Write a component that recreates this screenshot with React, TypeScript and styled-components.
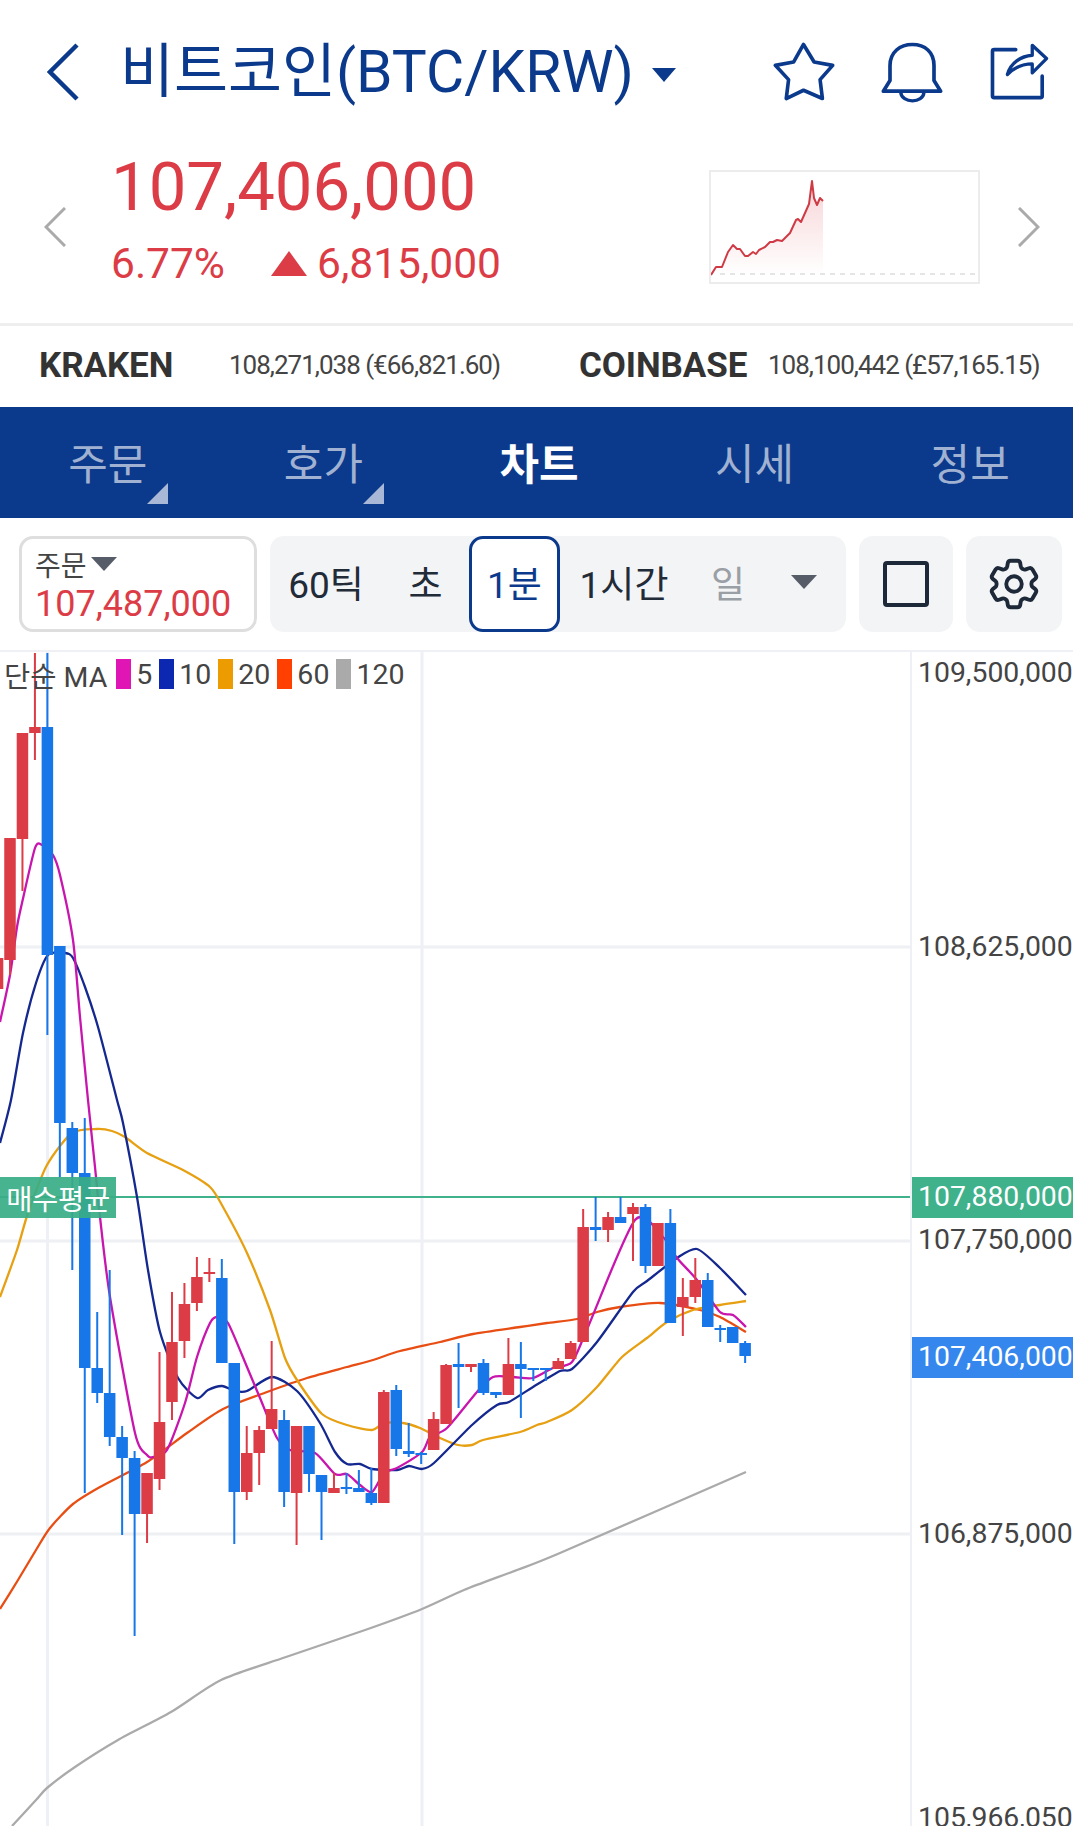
import { FC, Fragment } from 'react';
import styled, { createGlobalStyle } from 'styled-components';
import { HiOutlineCog6Tooth } from 'react-icons/hi2';

const NAVY = '#0b3a8c';
const RED = '#dc3c46';
const BLUE = '#1777e8';

const GlobalStyle = createGlobalStyle`
    html, body {
        margin: 0;
        padding: 0;
        background: #ffffff;
    }
    * {
        box-sizing: border-box;
    }
`;

const Page = styled.div`
    width: 1073px;
    height: 1826px;
    overflow: hidden;
    background: #ffffff;
    font-family: Roboto, 'Noto Sans CJK KR', sans-serif;
`;

const Header = styled.header`
    display: flex;
    align-items: center;
    height: 133px;
    padding: 10px 24px 0 47px;
    color: ${NAVY};
`;

const Title = styled.h1`
    margin: 0 0 0 41px;
    font-size: 58.7px;
    font-weight: 400;
    line-height: 60px;
    white-space: nowrap;
`;

const TitleCaret = styled.span`
    width: 0;
    height: 0;
    margin: 6px 0 0 18px;
    border-left: 12.5px solid transparent;
    border-right: 12.5px solid transparent;
    border-top: 14px solid ${NAVY};
`;

const HeaderIcons = styled.div`
    display: flex;
    align-items: center;
    gap: 44px;
    margin-left: auto;
`;

const PriceRow = styled.section`
    display: flex;
    align-items: center;
    height: 193px;
    padding: 0 33px 3px 44px;
    border-bottom: 3px solid #eeeeee;
`;

const PriceBlock = styled.div`
    display: flex;
    flex-direction: column;
    margin-left: 45px;
    padding-bottom: 16px;
    color: ${RED};
`;

const PriceMain = styled.div`
    margin-bottom: 14px;
    font-size: 67px;
    line-height: 76px;
`;

const PriceSub = styled.div`
    display: flex;
    align-items: center;
    height: 50px;
    font-size: 42.5px;
`;

const UpTriangle = styled.span`
    width: 0;
    height: 0;
    margin: 0 10px 0 46px;
    border-left: 18px solid transparent;
    border-right: 18px solid transparent;
    border-bottom: 25px solid ${RED};
`;

const MiniBox = styled.div`
    width: 271px;
    height: 114px;
    margin-left: auto;
    margin-right: 38px;
    border: 2px solid #ececec;
`;

const ExchangeRow = styled.section`
    display: flex;
    align-items: center;
    height: 81px;
    padding: 0 0 3px 39px;
`;

const ExchangeName = styled.span<{ $width: number }>`
    width: ${(p) => p.$width}px;
    font-size: 35px;
    font-weight: 700;
    letter-spacing: -0.1px;
    color: #333333;
`;

const ExchangeValue = styled.span<{ $width: number }>`
    width: ${(p) => p.$width}px;
    font-size: 26px;
    letter-spacing: -1px;
    color: #444444;
    white-space: nowrap;
`;

const Tabs = styled.nav`
    display: grid;
    grid-template-columns: repeat(5, 215.6px);
    height: 111px;
    background: ${NAVY};
`;

const Tab = styled.div<{ $active?: boolean; $corner?: boolean }>`
    position: relative;
    display: flex;
    align-items: center;
    justify-content: center;
    padding-bottom: 3px;
    font-size: 43px;
    font-weight: ${(p) => (p.$active ? 700 : 400)};
    color: ${(p) => (p.$active ? '#ffffff' : '#a0b1d1')};

    &::after {
        content: '';
        display: ${(p) => (p.$corner ? 'block' : 'none')};
        position: absolute;
        left: 147px;
        top: 76px;
        width: 0;
        height: 0;
        border-left: 21px solid transparent;
        border-bottom: 21px solid #a9b8d6;
    }
`;

const Toolbar = styled.section`
    display: flex;
    gap: 13px;
    height: 132px;
    padding: 18px 11px 0 19px;
`;

const OrderBox = styled.div`
    display: flex;
    flex-direction: column;
    justify-content: center;
    width: 238px;
    height: 96px;
    padding: 4px 0 0 13px;
    border: 3px solid #dedede;
    border-radius: 14px;
`;

const OrderLabel = styled.div`
    display: flex;
    align-items: center;
    gap: 4px;
    height: 36px;
    font-size: 28px;
    color: #444444;
`;

const Caret = styled.span<{ $width: number; $height: number }>`
    width: 0;
    height: 0;
    border-left: ${(p) => p.$width / 2}px solid transparent;
    border-right: ${(p) => p.$width / 2}px solid transparent;
    border-top: ${(p) => p.$height}px solid #565d68;
`;

const OrderPrice = styled.div`
    font-size: 36px;
    line-height: 44px;
    color: ${RED};
`;

const Intervals = styled.div`
    display: grid;
    grid-template-columns: 112px 87px 91px 128px 80px 72px;
    width: 576px;
    height: 96px;
    border-radius: 14px;
    background: #f3f4f6;
`;

const Interval = styled.div<{ $active?: boolean; $muted?: boolean }>`
    display: flex;
    align-items: center;
    justify-content: center;
    padding-bottom: 4px;
    font-size: 37px;
    color: ${(p) => (p.$active ? NAVY : p.$muted ? '#9a9ea5' : '#222b38')};
    background: ${(p) => (p.$active ? '#ffffff' : 'transparent')};
    border: ${(p) => (p.$active ? `3px solid ${NAVY}` : 'none')};
    border-radius: 14px;
`;

const ToolButton = styled.div<{ $width: number }>`
    display: flex;
    align-items: center;
    justify-content: center;
    width: ${(p) => p.$width}px;
    height: 96px;
    border-radius: 14px;
    background: #f3f4f6;
    color: #1d2939;
`;

const SquareIcon = styled.span`
    width: 46px;
    height: 46px;
    border: 4px solid #1d2939;
    border-radius: 4px;
`;

const ChartArea = styled.section`
    position: relative;
    display: grid;
    grid-template-columns: 910px 163px;
    height: 1176px;
    border-top: 2px solid #eef0f5;
`;

const Plot = styled.div`
    position: relative;
    overflow: hidden;
`;

const PlotSvg = styled.svg`
    display: block;
`;

const Legend = styled.div`
    position: absolute;
    left: 4px;
    top: 7px;
    display: flex;
    align-items: center;
    height: 30px;
    font-size: 28.5px;
    color: #444444;
`;

const LegendTitle = styled.span`
    margin-right: 9px;
    white-space: nowrap;
`;

const Swatch = styled.span<{ $color: string }>`
    width: 15px;
    height: 30px;
    margin-right: 5px;
    background: ${(p) => p.$color};
`;

const LegendValue = styled.span`
    margin-right: 7px;
`;

const AvgTag = styled.div`
    position: absolute;
    left: 0;
    top: 525px;
    display: flex;
    align-items: center;
    justify-content: center;
    width: 116px;
    height: 41px;
    font-size: 28.5px;
    letter-spacing: -0.3px;
    color: #ffffff;
    background: rgba(56, 172, 134, 0.92);
`;

const Axis = styled.div`
    position: relative;
    overflow: hidden;
    border-left: 2px solid #eef0f5;
`;

const AxisLabel = styled.div<{ $center: number; $bg?: string }>`
    position: absolute;
    left: 0;
    top: ${(p) => p.$center - 20.5}px;
    width: 161px;
    height: 41px;
    padding-left: 6px;
    font-size: 28.4px;
    line-height: 40px;
    white-space: nowrap;
    color: ${(p) => (p.$bg ? '#ffffff' : '#444444')};
    background: ${(p) => p.$bg || 'transparent'};
`;

type Candle = [number, 'r' | 'b', number, number, number, number];

// index, colour, wick top, body top, body bottom, wick bottom
const candles: Candle[] = [
    [-1, 'r', 958, 958, 989, 989],
    [0, 'r', 838, 838, 960, 975],
    [1, 'r', 733, 733, 839, 891],
    [2, 'r', 653, 727, 733, 760],
    [3, 'b', 653, 727, 955, 1035],
    [4, 'b', 946, 946, 1123, 1177],
    [5, 'b', 1122, 1128, 1173, 1270],
    [6, 'b', 1118, 1173, 1368, 1493],
    [7, 'b', 1312, 1368, 1393, 1403],
    [8, 'b', 1270, 1393, 1437, 1446],
    [9, 'b', 1426, 1437, 1458, 1535],
    [10, 'b', 1451, 1458, 1514, 1636],
    [11, 'r', 1473, 1473, 1514, 1543],
    [12, 'r', 1352, 1422, 1479, 1490],
    [13, 'r', 1292, 1342, 1402, 1420],
    [14, 'r', 1283, 1304, 1341, 1358],
    [15, 'r', 1257, 1277, 1303, 1311],
    [16, 'r', 1258, 1272, 1274, 1282],
    [17, 'b', 1259, 1278, 1363, 1363],
    [18, 'b', 1363, 1363, 1492, 1544],
    [19, 'r', 1426, 1453, 1492, 1500],
    [20, 'r', 1426, 1430, 1453, 1485],
    [21, 'r', 1341, 1409, 1429, 1429],
    [22, 'b', 1410, 1420, 1492, 1507],
    [23, 'r', 1426, 1426, 1493, 1545],
    [24, 'b', 1426, 1426, 1474, 1492],
    [25, 'b', 1475, 1475, 1492, 1540],
    [26, 'r', 1473, 1488, 1493, 1493],
    [27, 'b', 1473, 1487, 1489, 1494],
    [28, 'b', 1470, 1488, 1492, 1492],
    [29, 'b', 1468, 1493, 1503, 1505],
    [30, 'r', 1390, 1392, 1503, 1503],
    [31, 'b', 1385, 1390, 1449, 1456],
    [32, 'b', 1423, 1451, 1454, 1457],
    [33, 'b', 1452, 1453, 1455, 1464],
    [34, 'r', 1412, 1419, 1450, 1450],
    [35, 'r', 1364, 1365, 1424, 1424],
    [36, 'b', 1343, 1364, 1367, 1408],
    [37, 'r', 1364, 1364, 1367, 1372],
    [38, 'b', 1359, 1363, 1393, 1395],
    [39, 'b', 1392, 1392, 1395, 1398],
    [40, 'r', 1338, 1364, 1395, 1395],
    [41, 'b', 1342, 1364, 1369, 1418],
    [42, 'b', 1368, 1368, 1370, 1381],
    [43, 'b', 1368, 1368, 1370, 1381],
    [44, 'r', 1358, 1361, 1369, 1369],
    [45, 'r', 1341, 1343, 1359, 1359],
    [46, 'r', 1209, 1227, 1342, 1342],
    [47, 'b', 1197, 1227, 1230, 1241],
    [48, 'r', 1212, 1217, 1230, 1242],
    [49, 'b', 1197, 1217, 1223, 1223],
    [50, 'r', 1203, 1207, 1214, 1261],
    [51, 'b', 1204, 1207, 1266, 1273],
    [52, 'r', 1223, 1223, 1266, 1266],
    [53, 'b', 1209, 1223, 1323, 1323],
    [54, 'r', 1278, 1297, 1307, 1336],
    [55, 'r', 1258, 1280, 1297, 1303],
    [56, 'b', 1273, 1280, 1327, 1327],
    [57, 'b', 1325, 1328, 1330, 1342],
    [58, 'b', 1327, 1327, 1343, 1343],
    [59, 'b', 1341, 1343, 1356, 1363],
];

const ma5 =
    '0,1022 10,975 17,927 22,903 35,848 42,845 53,855 60,875 73,940 80,1017 88,1100 95,1167 100,1217 110,1297 135,1433 147,1455 153,1457 167,1450 185,1403 197,1357 210,1323 217,1317 228,1323 247,1367 260,1398 277,1438 290,1450 315,1453 335,1474 347,1474 360,1485 372,1492 384,1473 397,1468 422,1452 430,1437 447,1428 477,1392 493,1377 513,1377 533,1378 553,1368 572,1362 588,1327 635,1220 663,1237 677,1258 697,1280 720,1312 733,1315 746,1327';
const ma10 =
    '0,1143 11,1100 23,1033 36,983 48,955 65,953 73,958 85,987 98,1027 117,1100 123,1123 137,1197 148,1270 160,1332 178,1378 197,1398 208,1390 222,1386 235,1391 247,1391 272,1377 297,1391 320,1423 335,1452 347,1464 360,1464 372,1469 397,1470 409,1466 422,1469 434,1463 472,1425 497,1405 509,1402 533,1387 560,1371 572,1369 597,1342 633,1292 647,1281 677,1258 697,1249 720,1268 746,1295';
const ma20 =
    '0,1297 17,1250 28,1213 47,1165 72,1133 97,1129 112,1131 125,1137 147,1153 183,1170 210,1187 223,1207 247,1253 270,1310 285,1358 297,1380 322,1414 347,1425 372,1430 384,1423 403,1423 420,1428 440,1438 458,1445 472,1445 483,1440 520,1432 537,1425 547,1422 572,1410 597,1387 622,1357 647,1338 667,1322 693,1310 720,1305 746,1301';
const ma60 =
    '0,1609 18,1580 36,1550 50,1528 73,1504 100,1487 147,1462 187,1433 223,1409 267,1392 307,1378 347,1367 373,1360 400,1351 440,1342 473,1334 520,1327 547,1323 577,1319 597,1312 620,1307 660,1303 700,1310 720,1317 746,1332';
const ma120 =
    '12,1826 36,1800 47,1788 75,1767 118,1740 171,1712 221,1680 286,1657 368,1629 422,1609 464,1590 517,1570 560,1553 746,1472';

const maLines = [
    { points: ma120, color: '#aaaaaa' },
    { points: ma60, color: '#e84e14' },
    { points: ma20, color: '#e6a012' },
    { points: ma10, color: '#14288f' },
    { points: ma5, color: '#c815ae' },
];

const legendItems = [
    { color: '#e016b4', value: '5' },
    { color: '#0c28b0', value: '10' },
    { color: '#ec9c00', value: '20' },
    { color: '#ff4000', value: '60' },
    { color: '#aaaaaa', value: '120' },
];

const miniLine =
    '0,103 5,95 11,95 17,80 22,73 26,77 29,77 34,84 37,84 42,80 45,82 48,78 54,75 59,70 62,70 66,68 71,69 79,61 85,48 87,47 90,50 98,32 101,9 103,26 106,33 109,26 112,29';

// turns the measured points into a soft curve, the moving averages are not angular
const smoothPath = (points: string) => {
    const pts = points.split(' ').map((pair) => pair.split(',').map(Number));
    let d = `M${pts[0][0]} ${pts[0][1]}`;
    for (let i = 0; i < pts.length - 1; i++) {
        const p0 = pts[Math.max(i - 1, 0)];
        const p1 = pts[i];
        const p2 = pts[i + 1];
        const p3 = pts[Math.min(i + 2, pts.length - 1)];
        const c1x = p1[0] + (p2[0] - p0[0]) / 8;
        const c1y = p1[1] + (p2[1] - p0[1]) / 8;
        const c2x = p2[0] - (p3[0] - p1[0]) / 8;
        const c2y = p2[1] - (p3[1] - p1[1]) / 8;
        d += `C${c1x} ${c1y} ${c2x} ${c2y} ${p2[0]} ${p2[1]}`;
    }
    return d;
};

const App: FC = () => {
    return (
        <Page>
            <GlobalStyle />
            <Header>
                <svg width="32" height="60" viewBox="0 0 32 60" fill="none">
                    <path d="M30 3 3 30 30 57" stroke={NAVY} strokeWidth="4.5" />
                </svg>
                <Title>비트코인(BTC/KRW)</Title>
                <TitleCaret />
                <HeaderIcons>
                    <svg width="64" height="61" viewBox="65 62 193 183" fill="none">
                        <path
                            d="M160 72 192 125 248 135 210 178 217 235 160 210 108 235 115 178 75 135 130 125Z"
                            stroke={NAVY}
                            strokeWidth="11"
                            strokeLinejoin="round"
                        />
                    </svg>
                    <svg width="65" height="62" viewBox="390 62 195 185" fill="none">
                        <path
                            d="M400 212 420 180V135C420 95 450 72 487 72 525 72 552 95 552 135V180L572 212Z"
                            stroke={NAVY}
                            strokeWidth="11"
                            strokeLinejoin="round"
                        />
                        <path d="M452 215C455 250 520 250 522 215" stroke={NAVY} strokeWidth="10" />
                    </svg>
                    <svg width="60" height="57" viewBox="720 65 180 172" fill="none">
                        <path
                            d="M800 85H735a5 5 0 0 0-5 5V225a5 5 0 0 0 5 5H875a5 5 0 0 0 5-5V165"
                            stroke={NAVY}
                            strokeWidth="11"
                            strokeLinecap="round"
                        />
                        <path
                            d="M775 160C785 125 815 105 850 102V72L893 112 850 155V128C820 128 795 140 775 160Z"
                            stroke={NAVY}
                            strokeWidth="10"
                            strokeLinejoin="round"
                        />
                    </svg>
                </HeaderIcons>
            </Header>

            <PriceRow>
                <svg width="22" height="40" viewBox="0 0 22 40" fill="none">
                    <path d="M21 1 2 20 21 39" stroke="#aaaaaa" strokeWidth="3" />
                </svg>
                <PriceBlock>
                    <PriceMain>107,406,000</PriceMain>
                    <PriceSub>
                        6.77%
                        <UpTriangle />
                        6,815,000
                    </PriceSub>
                </PriceBlock>
                <MiniBox>
                    <svg width="267" height="110" viewBox="0 0 267 110" fill="none">
                        <defs>
                            <linearGradient id="miniFill" x1="0" y1="0" x2="0" y2="1">
                                <stop offset="0" stopColor={RED} stopOpacity="0.22" />
                                <stop offset="1" stopColor={RED} stopOpacity="0" />
                            </linearGradient>
                        </defs>
                        <polygon points={`${miniLine} 112,103 0,103`} fill="url(#miniFill)" />
                        <line x1="9" y1="102" x2="265" y2="102" stroke="#dddddd" strokeWidth="1.5" strokeDasharray="5 5" />
                        <polyline points={miniLine} stroke="#cf3a45" strokeWidth="2" strokeLinejoin="round" />
                    </svg>
                </MiniBox>
                <svg width="22" height="40" viewBox="0 0 22 40" fill="none">
                    <path d="M1 1 20 20 1 39" stroke="#aaaaaa" strokeWidth="3" />
                </svg>
            </PriceRow>

            <ExchangeRow>
                <ExchangeName $width={190}>KRAKEN</ExchangeName>
                <ExchangeValue $width={350}>108,271,038 (€66,821.60)</ExchangeValue>
                <ExchangeName $width={189}>COINBASE</ExchangeName>
                <ExchangeValue $width={273}>108,100,442 (£57,165.15)</ExchangeValue>
            </ExchangeRow>

            <Tabs>
                <Tab $corner>주문</Tab>
                <Tab $corner>호가</Tab>
                <Tab $active>차트</Tab>
                <Tab>시세</Tab>
                <Tab>정보</Tab>
            </Tabs>

            <Toolbar>
                <OrderBox>
                    <OrderLabel>
                        주문
                        <Caret $width={26} $height={14} />
                    </OrderLabel>
                    <OrderPrice>107,487,000</OrderPrice>
                </OrderBox>
                <Intervals>
                    <Interval>60틱</Interval>
                    <Interval>초</Interval>
                    <Interval $active>1분</Interval>
                    <Interval>1시간</Interval>
                    <Interval $muted>일</Interval>
                    <Interval>
                        <Caret $width={26} $height={14} />
                    </Interval>
                </Intervals>
                <ToolButton $width={94}>
                    <SquareIcon />
                </ToolButton>
                <ToolButton $width={96}>
                    <HiOutlineCog6Tooth size={62} />
                </ToolButton>
            </Toolbar>

            <ChartArea>
                <Plot>
                    <PlotSvg width="910" height="1174" viewBox="0 652 910 1174" fill="none">
                        {[947, 1241, 1534].map((y) => (
                            <line key={y} x1="0" y1={y} x2="910" y2={y} stroke="#eef0f3" strokeWidth="3" />
                        ))}
                        {[47.5, 422].map((x) => (
                            <line key={x} x1={x} y1="652" x2={x} y2="1826" stroke="#eef0f5" strokeWidth="3" />
                        ))}
                        <line x1="0" y1="1197" x2="910" y2="1197" stroke="#3fb18b" strokeWidth="2" />
                        {maLines.map((line) => (
                            <path key={line.color} d={smoothPath(line.points)} stroke={line.color} strokeWidth="2.3" />
                        ))}
                        {candles.map(([index, tone, wickTop, bodyTop, bodyBottom, wickBottom]) => {
                            const x = 10 + 12.46 * index;
                            const color = tone === 'r' ? RED : BLUE;
                            return (
                                <g key={index} fill={color}>
                                    <rect x={x - 1} y={wickTop} width="2" height={wickBottom - wickTop} />
                                    <rect x={x - 5.75} y={bodyTop} width="11.5" height={bodyBottom - bodyTop} />
                                </g>
                            );
                        })}
                    </PlotSvg>
                    <Legend>
                        <LegendTitle>단순 MA</LegendTitle>
                        {legendItems.map((item) => (
                            <Fragment key={item.color}>
                                <Swatch $color={item.color} />
                                <LegendValue>{item.value}</LegendValue>
                            </Fragment>
                        ))}
                    </Legend>
                    <AvgTag>매수평균</AvgTag>
                </Plot>
                <Axis>
                    <AxisLabel $center={21}>109,500,000</AxisLabel>
                    <AxisLabel $center={295}>108,625,000</AxisLabel>
                    <AxisLabel $center={545} $bg="#3fb18b">107,880,000</AxisLabel>
                    <AxisLabel $center={588}>107,750,000</AxisLabel>
                    <AxisLabel $center={705} $bg="#3587ee">107,406,000</AxisLabel>
                    <AxisLabel $center={882}>106,875,000</AxisLabel>
                    <AxisLabel $center={1166}>105,966,050</AxisLabel>
                </Axis>
            </ChartArea>
        </Page>
    );
};

export default App;
